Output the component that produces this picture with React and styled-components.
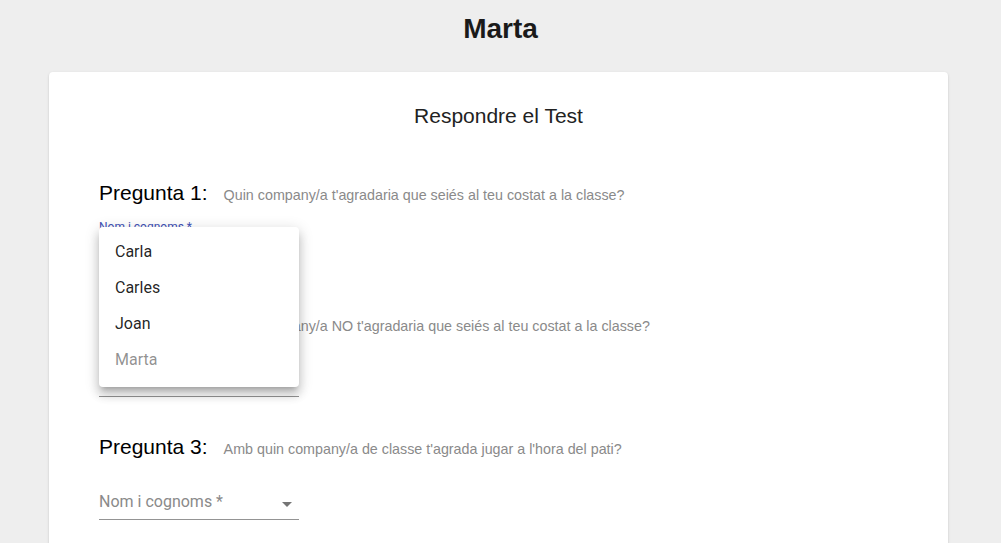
import React from 'react';
import styled, { createGlobalStyle } from 'styled-components';

const GlobalStyle = createGlobalStyle`
  body {
    margin: 0;
    background: #eeeeee;
    font-family: 'Liberation Sans', Arial, sans-serif;
  }
`;

const Page = styled.div`
  padding-top: 12px;
`;

const Name = styled.h1`
  margin: 0;
  text-align: center;
  font-size: 28px;
  line-height: 34px;
  font-weight: bold;
  color: #1a1a1a;
`;

const Card = styled.div`
  margin: 26px 0 0 49px;
  width: 899px;
  min-height: 500px;
  box-sizing: border-box;
  padding: 31px 50px 40px;
  background: #fff;
  border-radius: 4px;
  box-shadow: 0px 2px 1px -1px rgba(0, 0, 0, 0.2), 0px 1px 1px 0px rgba(0, 0, 0, 0.14),
    0px 1px 3px 0px rgba(0, 0, 0, 0.12);
`;

const CardTitle = styled.h2`
  margin: 0 0 51px;
  text-align: center;
  font-size: 21px;
  line-height: 26px;
  font-weight: normal;
  color: #222;
`;

const Questions = styled.div`
  display: flex;
  flex-direction: column;
  gap: 37px;
`;

const Question = styled.div`
  display: flex;
  flex-direction: column;
  gap: 12px;
`;

const QuestionHeader = styled.div`
  display: flex;
  align-items: baseline;
  gap: 16px;
  height: 26px;
`;

const QuestionNumber = styled.span`
  font-size: 21px;
  line-height: 26px;
  color: #000;
`;

const QuestionText = styled.span`
  font-size: 14.3px;
  color: #8a8a8a;
`;

const Field = styled.div`
  position: relative;
  width: 200px;
  height: 48px;
  margin-bottom: ${p => (p.$open ? '8px' : '0')};
`;

const Label = styled.label`
  position: absolute;
  left: 0;
  top: ${p => (p.$shrink ? '3px' : '22px')};
  font-family: Roboto, sans-serif;
  font-size: ${p => (p.$shrink ? '12px' : '16px')};
  line-height: 1;
  color: ${p => (p.$focused ? '#3f51b5' : '#8a8a8a')};
  white-space: nowrap;
`;

const Input = styled.div`
  position: absolute;
  left: 0;
  right: 0;
  bottom: 0;
  height: 32px;
  border-bottom: 1px solid #949494;
`;

const Arrow = styled.svg`
  position: absolute;
  right: 0;
  top: 5px;
  width: 24px;
  height: 24px;
  fill: rgba(0, 0, 0, 0.54);
`;

const Menu = styled.ul`
  position: absolute;
  top: 9px;
  left: 0;
  width: 200px;
  margin: 0;
  padding: 6px 0 10px;
  list-style: none;
  background: #fff;
  border-radius: 4px;
  z-index: 10;
  box-shadow: 0px 5px 5px -3px rgba(0, 0, 0, 0.2), 0px 8px 10px 1px rgba(0, 0, 0, 0.14),
    0px 3px 14px 2px rgba(0, 0, 0, 0.12);
`;

const MenuItem = styled.li`
  height: 36px;
  display: flex;
  align-items: center;
  padding: 0 16px;
  font-family: Roboto, sans-serif;
  font-size: 16px;
  color: rgba(0, 0, 0, 0.87);
  opacity: ${p => (p.$disabled ? 0.5 : 1)};
`;

const questions = [
  'Quin company/a t\'agradaria que seiés al teu costat a la classe?',
  'Quin company/a NO t\'agradaria que seiés al teu costat a la classe?',
  'Amb quin company/a de classe t\'agrada jugar a l\'hora del pati?',
];

const students = ['Carla', 'Carles', 'Joan', 'Marta'];

const SelectField = ({ open }) => (
  <Field $open={open}>
    <Label $shrink={open} $focused={open}>Nom i cognoms *</Label>
    <Input>
      <Arrow viewBox="0 0 24 24">
        <path d="M7 10l5 5 5-5z" />
      </Arrow>
    </Input>
    {open && (
      <Menu>
        {students.map(s => (
          <MenuItem key={s} $disabled={s === 'Marta'}>{s}</MenuItem>
        ))}
      </Menu>
    )}
  </Field>
);

export default function App() {
  return (
    <Page>
      <GlobalStyle />
      <Name>Marta</Name>
      <Card>
        <CardTitle>Respondre el Test</CardTitle>
        <Questions>
          {questions.map((q, i) => (
            <Question key={i}>
              <QuestionHeader>
                <QuestionNumber>Pregunta {i + 1}:</QuestionNumber>
                <QuestionText>{q}</QuestionText>
              </QuestionHeader>
              <SelectField open={i === 0} />
            </Question>
          ))}
        </Questions>
      </Card>
    </Page>
  );
}
